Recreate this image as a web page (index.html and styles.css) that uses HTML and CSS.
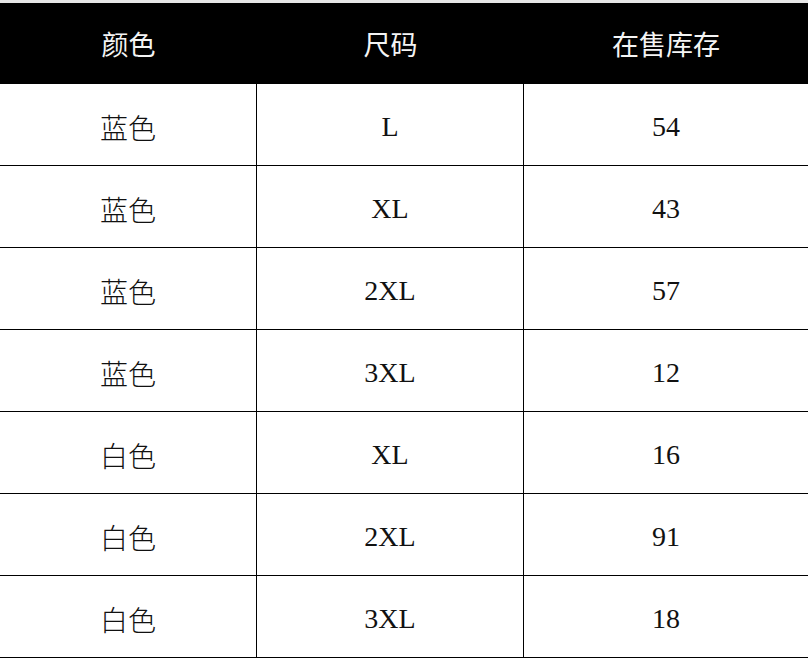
FILE: index.html
```html
<!DOCTYPE html>
<html lang="zh">
<head>
<meta charset="utf-8">
<link rel="stylesheet" href="styles.css">
</head>
<body>
<div class="topbar"></div>
<div class="table">
  <div class="row head">
    <div class="cell">颜色</div>
    <div class="cell">尺码</div>
    <div class="cell">在售库存</div>
  </div>
  <div class="row"><div class="cell">蓝色</div><div class="cell">L</div><div class="cell">54</div></div>
  <div class="row"><div class="cell">蓝色</div><div class="cell">XL</div><div class="cell">43</div></div>
  <div class="row"><div class="cell">蓝色</div><div class="cell">2XL</div><div class="cell">57</div></div>
  <div class="row"><div class="cell">蓝色</div><div class="cell">3XL</div><div class="cell">12</div></div>
  <div class="row"><div class="cell">白色</div><div class="cell">XL</div><div class="cell">16</div></div>
  <div class="row"><div class="cell">白色</div><div class="cell">2XL</div><div class="cell">91</div></div>
  <div class="row"><div class="cell">白色</div><div class="cell">3XL</div><div class="cell">18</div></div>
</div>
</body>
</html>
```
FILE: styles.css
```css
html, body {
  margin: 0;
  padding: 0;
  background: #ffffff;
}
body {
  width: 808px;
  height: 662px;
  overflow: hidden;
  font-family: "Liberation Serif", "Noto Sans CJK SC", serif;
  color: #111111;
}
.topbar {
  height: 3px;
  background: #e6e6e6;
}
.table {
  display: flex;
  flex-direction: column;
}
.row {
  display: grid;
  grid-template-columns: 257px 267px 1fr;
  height: 82px;
  border-bottom: 1px solid #000;
  box-sizing: border-box;
}
.row.head {
  height: 81px;
  background: #000;
  color: #f4f4f4;
  border-bottom: none;
}
.cell {
  display: flex;
  align-items: center;
  justify-content: center;
  font-size: 28px;
  font-weight: 300;
  padding-top: 4px;
  box-sizing: border-box;
}
.row:not(.head) .cell:not(:last-child) {
  border-right: 1px solid #000;
}
.row.head .cell {
  padding-top: 0;
  font-size: 27px;
  font-weight: 400;
}
```
